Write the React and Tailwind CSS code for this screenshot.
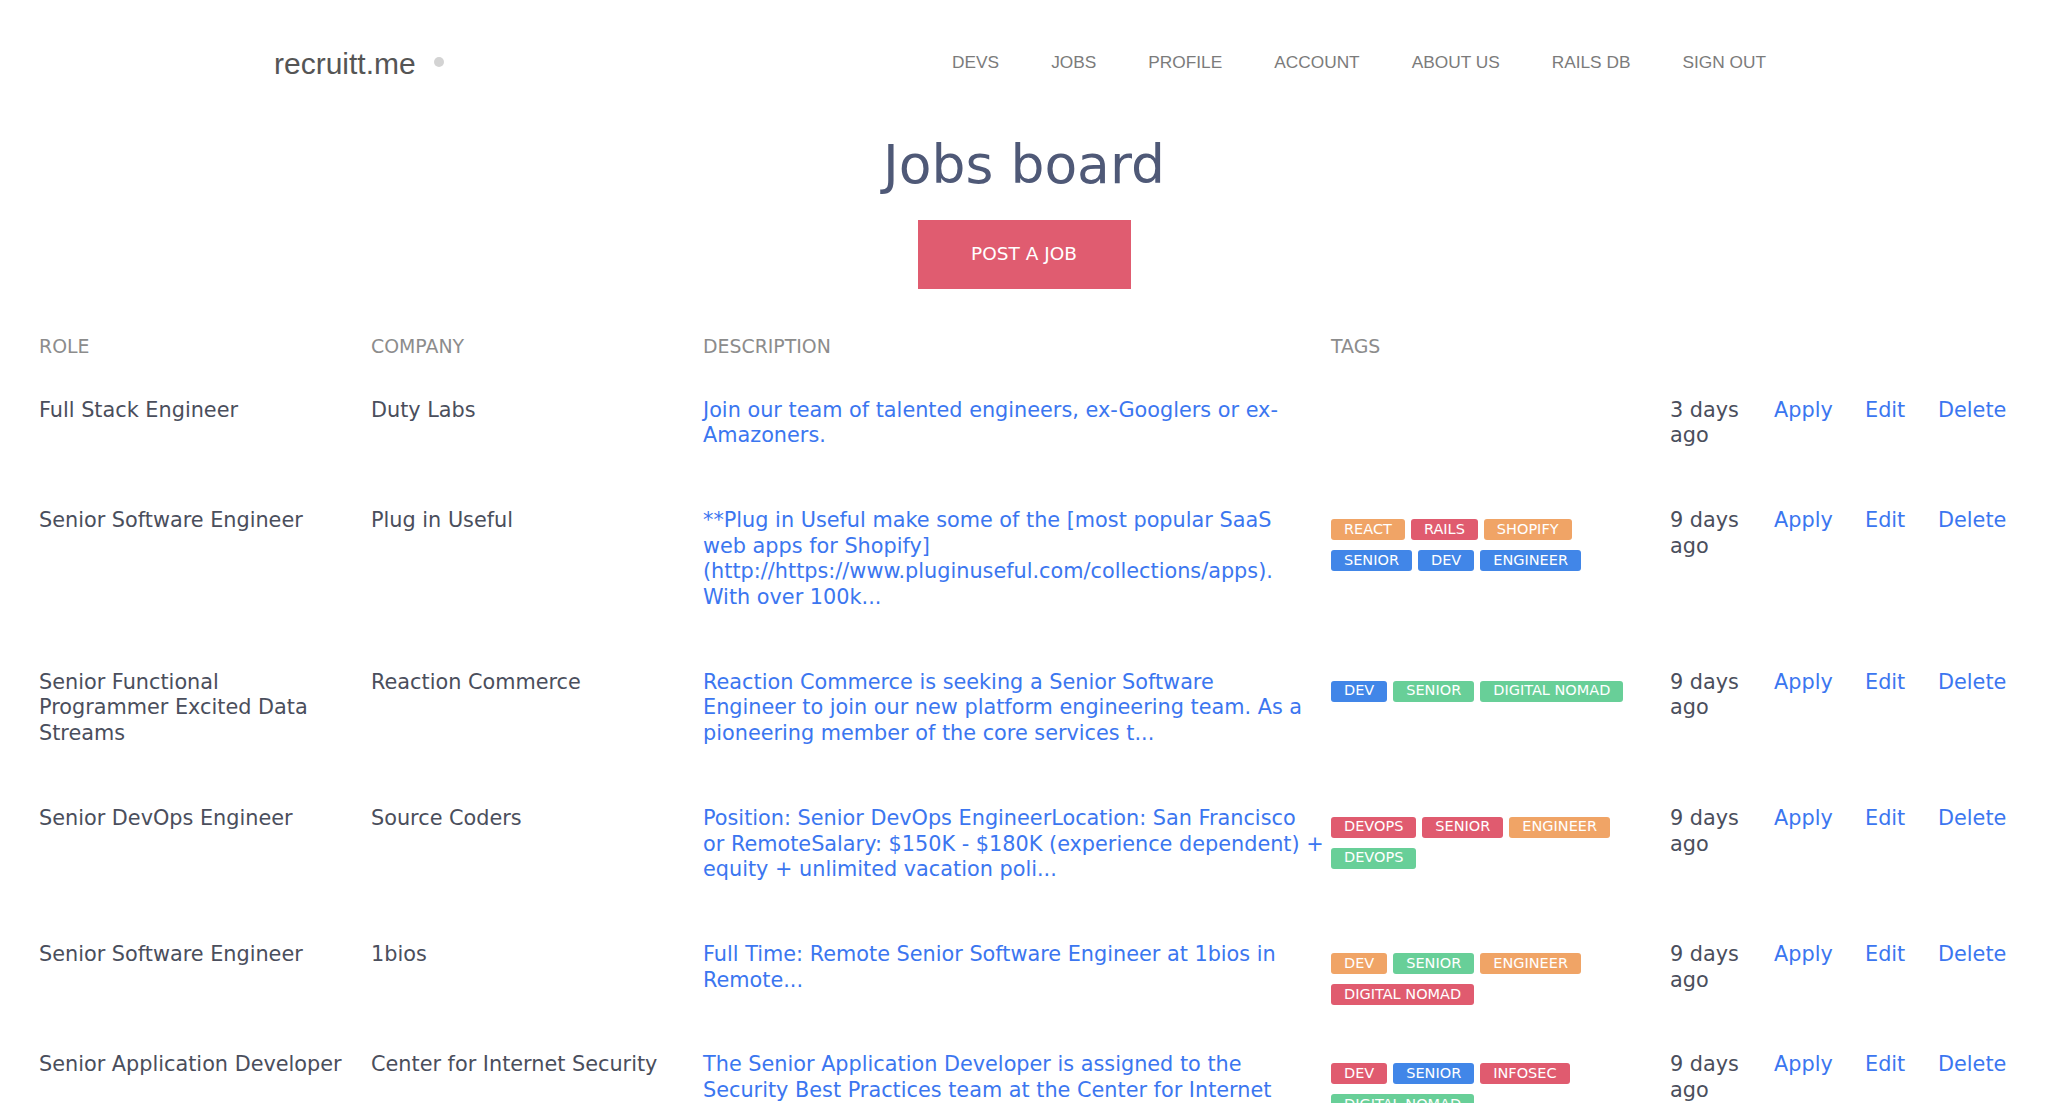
import React from "react";

const BODY_FONT = { fontFamily: "'DejaVu Sans', sans-serif" };
const NAV_FONT = { fontFamily: "'Liberation Sans', Arial, sans-serif" };

const TAG_COLORS = {
  orange: "bg-[#f0a466]",
  red: "bg-[#e05b6f]",
  blue: "bg-[#4186e8]",
  green: "bg-[#68cf98]",
};

const NAV = ["DEVS", "JOBS", "PROFILE", "ACCOUNT", "ABOUT US", "RAILS DB", "SIGN OUT"];

// descriptions are kept as the lines they break into on the board
const JOBS = [
  {
    role: ["Full Stack Engineer"],
    company: "Duty Labs",
    description: ["Join our team of talented engineers, ex-Googlers or ex-", "Amazoners."],
    tags: [],
    posted: "3 days ago",
  },
  {
    role: ["Senior Software Engineer"],
    company: "Plug in Useful",
    description: [
      "**Plug in Useful make some of the [most popular SaaS",
      "web apps for Shopify]",
      "(http://https://www.pluginuseful.com/collections/apps).",
      "With over 100k...",
    ],
    tags: [
      ["REACT", "orange"],
      ["RAILS", "red"],
      ["SHOPIFY", "orange"],
      ["SENIOR", "blue"],
      ["DEV", "blue"],
      ["ENGINEER", "blue"],
    ],
    posted: "9 days ago",
  },
  {
    role: ["Senior Functional", "Programmer Excited Data", "Streams"],
    company: "Reaction Commerce",
    description: [
      "Reaction Commerce is seeking a Senior Software",
      "Engineer to join our new platform engineering team. As a",
      "pioneering member of the core services t...",
    ],
    tags: [
      ["DEV", "blue"],
      ["SENIOR", "green"],
      ["DIGITAL NOMAD", "green"],
    ],
    posted: "9 days ago",
  },
  {
    role: ["Senior DevOps Engineer"],
    company: "Source Coders",
    description: [
      "Position: Senior DevOps EngineerLocation: San Francisco",
      "or RemoteSalary: $150K - $180K (experience dependent) +",
      "equity + unlimited vacation poli...",
    ],
    tags: [
      ["DEVOPS", "red"],
      ["SENIOR", "red"],
      ["ENGINEER", "orange"],
      ["DEVOPS", "green"],
    ],
    posted: "9 days ago",
  },
  {
    role: ["Senior Software Engineer"],
    company: "1bios",
    description: ["Full Time: Remote Senior Software Engineer at 1bios in", "Remote..."],
    tags: [
      ["DEV", "orange"],
      ["SENIOR", "green"],
      ["ENGINEER", "orange"],
      ["DIGITAL NOMAD", "red"],
    ],
    posted: "9 days ago",
  },
  {
    role: ["Senior Application Developer"],
    company: "Center for Internet Security",
    description: [
      "The Senior Application Developer is assigned to the",
      "Security Best Practices team at the Center for Internet",
      "Security, where...",
    ],
    tags: [
      ["DEV", "red"],
      ["SENIOR", "blue"],
      ["INFOSEC", "red"],
      ["DIGITAL NOMAD", "green"],
    ],
    posted: "9 days ago",
  },
];

const GRID = "grid grid-cols-[332px_332px_628px_339px_104px_91px_73px_1fr]";

function Lines({ lines }) {
  return lines.map((line, i) => (
    <span key={i} className="block whitespace-nowrap">
      {line}
    </span>
  ));
}

function Tag({ label, color }) {
  return (
    <span
      className={`inline-flex h-[21px] items-center rounded-[3px] px-[13px] text-[14.5px] text-white ${TAG_COLORS[color]}`}
    >
      {label}
    </span>
  );
}

function JobRow({ job }) {
  return (
    <div className={`${GRID} pt-[30px] pb-[29px] text-[20.8px] leading-[25.7px] text-[#4a4e5c]`}>
      <div className="pr-[20px]">
        <Lines lines={job.role} />
      </div>
      <div className="pr-[20px]">{job.company}</div>
      <a href="#" className="pr-[20px] text-[#3b76f0]">
        <Lines lines={job.description} />
      </a>
      <div className="-mb-[12px] flex flex-wrap content-start gap-x-[6px] gap-y-[10px] pt-[11px] pr-[20px]">
        {job.tags.map(([label, color], i) => (
          <Tag key={i} label={label} color={color} />
        ))}
      </div>
      <div className="pr-[30px]">{job.posted}</div>
      <a href="#" className="text-[#3b76f0]">Apply</a>
      <a href="#" className="text-[#3b76f0]">Edit</a>
      <a href="#" className="text-[#3b76f0]">Delete</a>
    </div>
  );
}

export default function App() {
  return (
    <div className="min-h-screen bg-white" style={BODY_FONT}>
      <header className="mx-auto flex h-[126px] w-[1500px] items-center justify-between pr-[8px]">
        <a href="#" className="flex items-center" style={NAV_FONT}>
          <span className="text-[30px] text-[#555555]">recruitt.me</span>
          <span className="ml-[18px] -mt-[2px] h-[10px] w-[10px] rounded-full bg-[#d3d3d3]" />
        </a>
        <nav className="flex items-center gap-[52px] text-[17.3px] text-[#7b7b7b]" style={NAV_FONT}>
          {NAV.map((item) => (
            <a key={item} href="#">
              {item}
            </a>
          ))}
        </nav>
      </header>

      <div className="flex flex-col items-center">
        <h1 className="mt-[12px] text-[53.5px] leading-none text-[#4f5977]">Jobs board</h1>
        <button className="mt-[28px] h-[69px] w-[213px] bg-[#e05c70] text-[18.5px] text-white">
          POST A JOB
        </button>
      </div>

      <div className="mt-[44px] px-[39px]">
        <div className={`${GRID} pb-[9px] text-[18.9px] leading-[26px] text-[#8c8c8c]`}>
          <div>ROLE</div>
          <div>COMPANY</div>
          <div>DESCRIPTION</div>
          <div>TAGS</div>
          <div />
          <div />
          <div />
          <div />
        </div>
        {JOBS.map((job, i) => (
          <JobRow key={i} job={job} />
        ))}
      </div>
    </div>
  );
}
